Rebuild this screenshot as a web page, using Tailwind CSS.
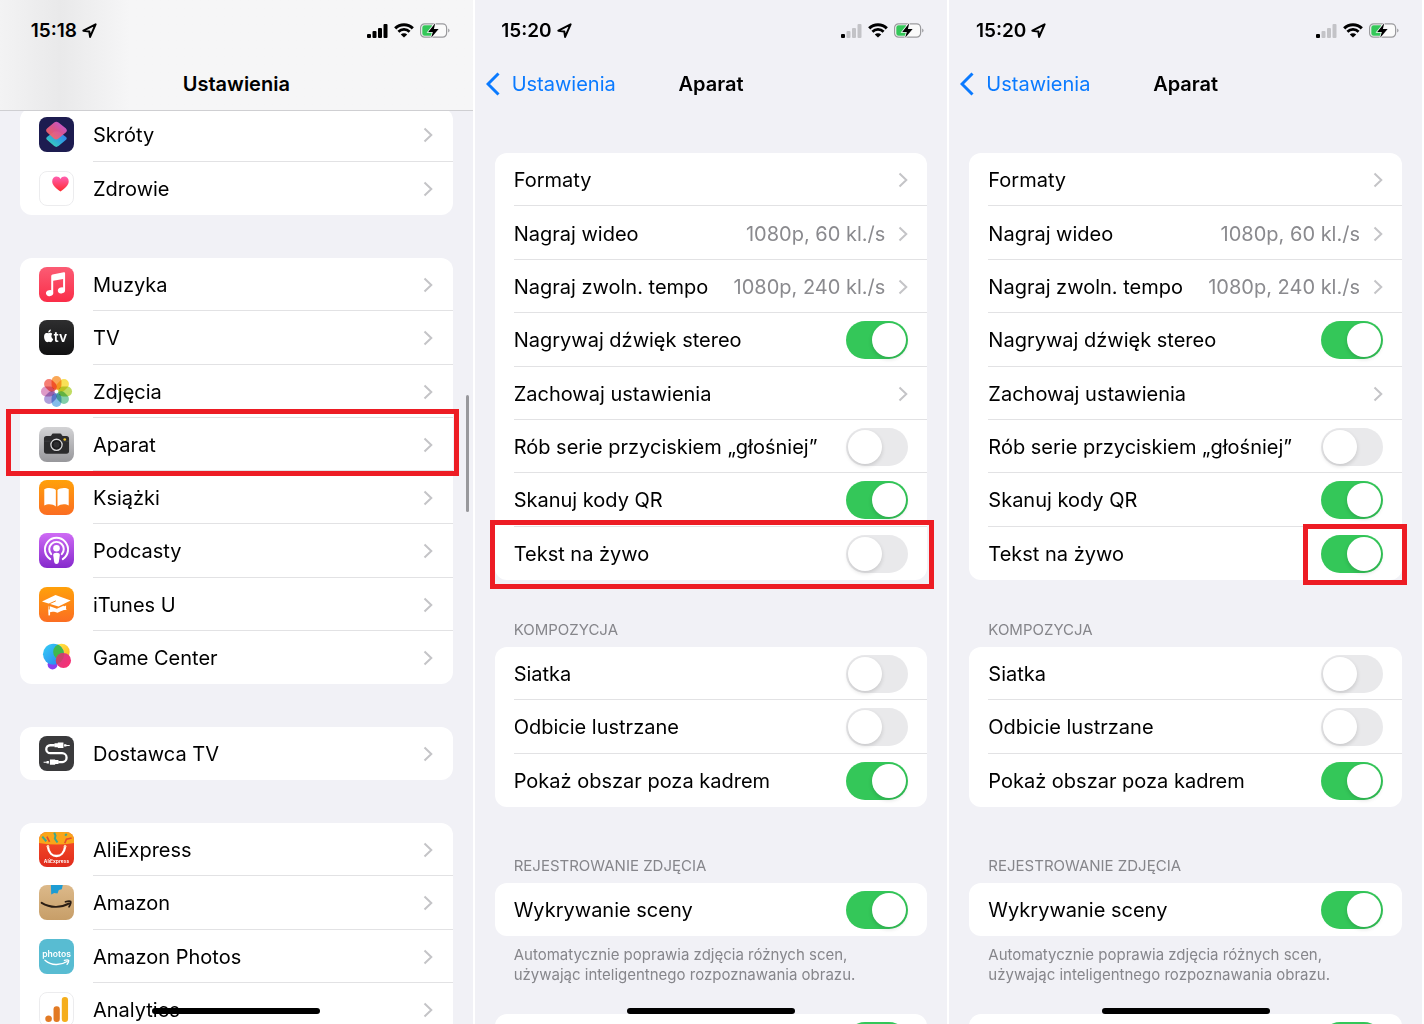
<!DOCTYPE html>
<html lang="pl">

<head>
  <meta charset="UTF-8">
  <meta name="viewport" content="width=device-width, initial-scale=1.0">
  <script src="https://cdn.jsdelivr.net/npm/@tailwindcss/browser@4"></script>
  <title>Ustawienia - Aparat</title>
</head>

<body class="bg-white font-['Inter','Liberation_Sans',sans-serif] text-black">
  <!-- shared gradients and status icons -->
  <svg class="absolute size-0" aria-hidden="true">
    <defs>
      <linearGradient id="g-short-top" x1="0" y1="1" x2="1" y2="0"><stop offset="0" stop-color="#ff6a4d"/><stop offset="0.5" stop-color="#e8588f"/><stop offset="1" stop-color="#c85cf0"/></linearGradient>
      <linearGradient id="g-short-bottom" x1="1" y1="0" x2="0" y2="1"><stop offset="0" stop-color="#3a6ff0"/><stop offset="0.5" stop-color="#2fa8dc"/><stop offset="1" stop-color="#3fe0a8"/></linearGradient>
      <linearGradient id="g-heart" x1="0" y1="0" x2="0" y2="1"><stop offset="0" stop-color="#ff5fb0"/><stop offset="1" stop-color="#ff2a2f"/></linearGradient>
      <linearGradient id="g-music" x1="0" y1="0" x2="0" y2="1"><stop offset="0" stop-color="#fb5c74"/><stop offset="1" stop-color="#fa2d48"/></linearGradient>
      <linearGradient id="g-tv" x1="0" y1="0" x2="0" y2="1"><stop offset="0" stop-color="#2e2e2f"/><stop offset="1" stop-color="#101011"/></linearGradient>
      <linearGradient id="g-camera" x1="0" y1="0" x2="0" y2="1"><stop offset="0" stop-color="#d3d3d5"/><stop offset="1" stop-color="#97979b"/></linearGradient>
      <linearGradient id="g-orange" x1="0" y1="0" x2="0" y2="1"><stop offset="0" stop-color="#ffa10a"/><stop offset="1" stop-color="#fb6d22"/></linearGradient>
      <linearGradient id="g-podcast" x1="0" y1="0" x2="0" y2="1"><stop offset="0" stop-color="#cf6bf5"/><stop offset="1" stop-color="#8529cc"/></linearGradient>
      <linearGradient id="g-game-blue" x1="0" y1="0" x2="1" y2="1"><stop offset="0" stop-color="#35d0f5"/><stop offset="1" stop-color="#2a7df0"/></linearGradient>
      <linearGradient id="g-game-yellow" x1="0" y1="0" x2="1" y2="1"><stop offset="0" stop-color="#fff04a"/><stop offset="1" stop-color="#ffae20"/></linearGradient>
      <linearGradient id="g-game-pink" x1="0" y1="0" x2="1" y2="1"><stop offset="0" stop-color="#d0408a"/><stop offset="1" stop-color="#ff2d6e"/></linearGradient>
      <linearGradient id="g-ali" x1="0" y1="0" x2="0" y2="1"><stop offset="0" stop-color="#f9552a"/><stop offset="1" stop-color="#e02a1c"/></linearGradient>
      <linearGradient id="g-amazon" x1="0" y1="0" x2="0" y2="1"><stop offset="0" stop-color="#dcb98a"/><stop offset="1" stop-color="#c79e68"/></linearGradient>
      <clipPath id="tile"><rect width="106" height="106" rx="24"/></clipPath>
      <clipPath id="game-blue"><circle cx="44" cy="43" r="32"/></clipPath>
    </defs>
    <symbol id="location" viewBox="0 0 15 15"><path d="M13.6 1.3 1.4 7.7l5.9.8.8 5.4z" fill="none" stroke="currentColor" stroke-width="2" stroke-linejoin="round"/></symbol>
    <symbol id="wifi" viewBox="0 0 20 15">
      <path d="M1.2 5.4a12.3 12.3 0 0 1 17.6 0" fill="none" stroke="currentColor" stroke-width="3"/>
      <path d="M4.4 8.8a7.9 7.9 0 0 1 11.2 0" fill="none" stroke="currentColor" stroke-width="2.7"/>
      <path d="M10 14.6 6.8 11.6a4.4 4.4 0 0 1 6.4 0z" fill="currentColor"/>
    </symbol>
    <symbol id="battery" viewBox="0 0 30 15">
      <rect x="0.6" y="0.8" width="26" height="13.4" rx="4" fill="#fafafa" stroke="#9a9a9d" stroke-width="1.2"/>
      <path d="M4.5 2.3H12v10.4H4.5a2.2 2.2 0 0 1-2.2-2.2v-6a2.2 2.2 0 0 1 2.2-2.2z" fill="#34c759"/>
      <path d="M28.2 5.5v4a2.2 2.2 0 0 0 0-4z" fill="#9a9a9d"/>
      <path d="M15.2.2 8.2 9h4.6l-1.6 5.8L18.6 6h-4.7z" fill="#000" stroke="#f4f4f6" stroke-width="1.6" paint-order="stroke"/>
    </symbol>
    <symbol id="chevron" viewBox="0 0 10 16"><path d="m1.5 1.5 6.8 6.5-6.8 6.5" fill="none" stroke="currentColor" stroke-width="2"/></symbol>
    <symbol id="back" viewBox="0 0 14 24"><path d="M12.5 1.5 2 12l10.5 10.5" fill="none" stroke="currentColor" stroke-width="3"/></symbol>
  </svg>

  <main class="grid h-screen grid-cols-3 gap-[2px] overflow-hidden pr-[2px]">
    <!-- Ustawienia -->
    <section class="relative overflow-hidden bg-[#f1f1f6]">
      <header class="absolute inset-x-0 top-0 z-10 h-[111px] border-b border-[#cfcfd2] bg-linear-to-r from-[#f3f3f4] via-[#e9e9ea] via-[60px] to-[#f6f6f7] to-[130px]">
        <div class="status" data-time="15:18" data-bars="4"></div>
        <h1 class="mt-[23px] text-center text-[20px] leading-[30px] font-semibold">Ustawienia</h1>
      </header>
      <nav id="settings" class="flex flex-col gap-[43px] px-5 pt-[108px]"></nav>
      <div class="absolute top-[395px] right-[4px] h-[117px] w-[3px] rounded-full bg-[#98989c]"></div>
      <div class="absolute inset-x-0 bottom-[10px] mx-auto h-[6px] w-[168px] rounded-full bg-black"></div>
    </section>

    <!-- Aparat, Tekst na żywo off -->
    <section class="camera relative overflow-hidden bg-[#f1f1f6]" data-live="off"></section>

    <!-- Aparat, Tekst na żywo on -->
    <section class="camera relative overflow-hidden bg-[#f1f1f6]" data-live="on"></section>
  </main>

  <script>
    const tile = fill => `<rect width="106" height="106" rx="24" fill="${fill}"/>`;
    const whiteTile = '<rect x="1.5" y="1.5" width="103" height="103" rx="23" fill="#fff" stroke="#ececee" stroke-width="3"/>';
    const petals = ['#f9993a', '#f7dc3a', '#b5d647', '#6cc79a', '#6fb0e6', '#a08fd6', '#d888bd', '#f4675a'];

    const icons = {
      shortcuts: tile('#1d1c50') + `
        <path d="M46 44 25 60q-6 5 0 10l21 18q6 5 13 0l22-18q6-5 0-10L59 44z" fill="url(#g-short-bottom)"/>
        <path d="M46 17 25 34q-7 6 0 13l20 18q7 6 14 0l22-18q7-6 0-13L59 17q-7-5-13 0z" fill="url(#g-short-top)" fill-opacity="0.93"/>`,
      health: whiteTile + '<path d="M65 62C50 52 40 43 40 31c0-15 18-19 25-7 7-12 25-8 25 7 0 12-10 21-25 31z" fill="url(#g-heart)"/>',
      music: tile('url(#g-music)') + `
        <path d="M37 28q0-4 4-5l34-7q4-1 4 3v51h-6V36l-30 6v38h-6z" fill="#fff"/>
        <ellipse cx="32" cy="79" rx="11" ry="9" transform="rotate(-15 32 79)" fill="#fff"/>
        <ellipse cx="68" cy="71" rx="11" ry="9" transform="rotate(-15 68 71)" fill="#fff"/>`,
      tv: tile('url(#g-tv)') + `
        <path d="M40 42c-4-5-9-3-12-2-4-1-8-2-11 3-4 8 0 20 6 24 3 1 4-1 7-1s4 2 7 1c3-2 5-6 6-9-6-3-7-11-3-16z" fill="#fff"/>
        <path d="M28 38c0-5 3-8 8-9 0 5-3 9-8 9z" fill="#fff"/>
        <text x="45" y="67" font-size="42" font-weight="600" fill="#fff">tv</text>`,
      photos: petals.map((color, i) =>
        `<rect x="38" y="6" width="30" height="42" rx="15" fill="${color}" fill-opacity="0.85" class="mix-blend-multiply" transform="rotate(${i * 45} 53 53)"/>`).join('')
        + '<circle cx="53" cy="53" r="4" fill="#fff"/>',
      camera: tile('url(#g-camera)') + `
        <path d="M23 27h11q3 0 4-3 1-4 6-4h19q5 0 6 4 1 3 4 3h10q8 0 8 8v38q0 8-8 8H23q-8 0-8-8V35q0-8 8-8z" fill="#2b2b2d"/>
        <path d="M16 43h75" stroke="#46464a" stroke-width="2"/>
        <circle cx="53" cy="54" r="20" fill="#1b1b1d"/>
        <circle cx="53" cy="54" r="17" fill="none" stroke="#d9d9db" stroke-width="4"/>
        <circle cx="53" cy="54" r="9" fill="#2e2e31"/>
        <circle cx="78" cy="38" r="4" fill="#f1c62e"/>`,
      books: tile('url(#g-orange)') + `
        <path d="M51 30c-8-7-26-8-35-2v49c10-5 26-5 35 3z" fill="#fff"/>
        <path d="M56 30c8-7 26-8 34-2v49c-9-5-25-5-34 3z" fill="#fff"/>`,
      podcasts: tile('url(#g-podcast)') + `
        <g fill="none" stroke="#fff" stroke-width="6" stroke-linecap="round">
          <path d="M34 79a35 35 0 1 1 38 0"/>
          <path d="M37 64a22 22 0 1 1 32 0"/>
        </g>
        <circle cx="53" cy="46" r="10" fill="#fff"/>
        <path d="M43 67q0-7 10-7t10 7l-3 21q-1 6-7 6t-7-6z" fill="#fff"/>`,
      itunes: tile('url(#g-orange)') + `
        <path d="m9 44 41-20 46 17-37 18z" fill="#fff"/>
        <path d="m29 57 25 9 20-9 10 12-31 4-24 4z" fill="#fff"/>
        <path d="m56 78 26-12v-10l-29 13-24-9v9z" fill="#fff"/>
        <path d="M51 42 31 51v34" fill="none" stroke="#fb8517" stroke-width="3"/>
        <path d="M31 68v18" stroke="#fff" stroke-width="5"/>`,
      game: `
        <circle cx="68" cy="36" r="25" fill="url(#g-game-yellow)"/>
        <circle cx="41" cy="74" r="15" fill="#8a3ff0"/>
        <circle cx="44" cy="43" r="32" fill="url(#g-game-blue)"/>
        <g clip-path="url(#game-blue)"><circle cx="68" cy="36" r="25" fill="#3fb84f"/></g>
        <circle cx="74" cy="62" r="23" fill="url(#g-game-pink)"/>
        <g clip-path="url(#game-blue)"><circle cx="74" cy="62" r="23" fill="#c8446a"/></g>`,
      provider: tile('#3a3a3c') + `
        <path d="M48 28H34a12 12 0 0 0 0 24h36a13 13 0 0 1 0 27H58" fill="none" stroke="#fff" stroke-width="7"/>
        <path d="M47 22h10v-2h17v16H57v-2H47zM76 25h7v2h10v3H83v2h-7zM59 73H49v-2H33v16h16v-2h10zM30 76h-7v2H14v3h9v2h7z" fill="#fff"/>`,
      ali: tile('url(#g-ali)') + `
        <g clip-path="url(#tile)">
          <path d="M0 0h106v33q-53 10-106 0z" fill="#f9a51a"/>
          <path d="m10 14 12 14M46 2l4 9-2 9 8 12M84 6l-5 5" fill="none" stroke="#3aa88f" stroke-width="6"/>
          <path d="m99 18-16 4-5 12M24 14l8 16" fill="none" stroke="#e64a2b" stroke-width="5"/>
        </g>
        <path d="M27 45c5 37 47 37 52 0" fill="none" stroke="#fff" stroke-width="7" stroke-linecap="round"/>
        <circle cx="27" cy="43" r="4" fill="#ffd9b8"/><circle cx="79" cy="43" r="4" fill="#ffd9b8"/>
        <text x="53" y="94" font-size="15" font-weight="600" text-anchor="middle" fill="#fff">AliExpress</text>`,
      amazon: tile('url(#g-amazon)') + `
        <path d="M36 0h36l-3 13-9 2-4 11-10-2-9 5z" fill="#1e9cd3"/>
        <path d="M8 54c26 16 58 16 84 2" fill="none" stroke="#2a1d14" stroke-width="6" stroke-linecap="round"/>
        <path d="M80 51q12-4 16-1 2 5-5 16" fill="none" stroke="#2a1d14" stroke-width="5" stroke-linecap="round"/>`,
      amazonPhotos: tile('#58bcd2') + `
        <text x="53" y="56" font-size="26" font-weight="600" text-anchor="middle" fill="#fff">photos</text>
        <path d="M18 64c20 17 46 17 67 4M77 65q10-3 13 0 1 4-5 12" fill="none" stroke="#fff" stroke-width="4" stroke-linecap="round"/>`,
      analytics: whiteTile + `
        <rect x="69" y="15" width="19" height="76" rx="9" fill="#f5ae1c"/>
        <rect x="44" y="43" width="19" height="48" rx="9" fill="#e27a24"/>
        <circle cx="29" cy="81" r="10" fill="#e27a24"/>`
    };

    const groups = [
      { size: 'min-h-[107px]', rows: [['shortcuts', 'Skróty'], ['health', 'Zdrowie']] },
      {
        size: 'min-h-[426px]',
        rows: [['music', 'Muzyka'], ['tv', 'TV'], ['photos', 'Zdjęcia'], ['camera', 'Aparat'],
          ['books', 'Książki'], ['podcasts', 'Podcasty'], ['itunes', 'iTunes U'], ['game', 'Game Center']]
      },
      { size: 'min-h-[53px]', rows: [['provider', 'Dostawca TV']] },
      {
        size: 'min-h-[213px]',
        rows: [['ali', 'AliExpress'], ['amazon', 'Amazon'], ['amazonPhotos', 'Amazon Photos'], ['analytics', 'Analytics']]
      }
    ];

    const chevron = '<svg class="h-4 w-[10px] shrink-0 text-[#c4c4c7]" aria-hidden="true"><use href="#chevron"/></svg>';
    const listClass = 'grid shrink-0 auto-rows-fr rounded-[12px] bg-white';

    document.getElementById('settings').innerHTML = groups.map(group => `
      <ul class="${listClass} ${group.size}">
        ${group.rows.map(([icon, name]) => `
          <li class="group relative">
            <a href="#" class="flex h-full items-center gap-[19px] pl-[19px]">
              <svg class="size-[35px] shrink-0" viewBox="0 0 106 106" aria-hidden="true">${icons[icon]}</svg>
              <span class="flex flex-1 items-center justify-between self-stretch border-b border-[#e2e2e4] pt-[2px] pr-5 text-[20px] group-last:border-transparent">${name}${chevron}</span>
            </a>
            ${name === 'Aparat' ? '<div class="pointer-events-none absolute -top-[9px] -right-[6px] -bottom-[5px] -left-[14px] z-10 border-5 border-[#ed1c24]"></div>' : ''}
          </li>`).join('')}
      </ul>`).join('');

    const toggle = (id, on) => `<input id="${id}" type="checkbox" role="switch" ${on ? 'checked' : ''}
      class="h-[38px] w-[62px] shrink-0 appearance-none rounded-full bg-[#e9e9eb] p-[2px] before:block before:size-[34px] before:rounded-full before:bg-white before:shadow-[0_2px_4px_rgba(0,0,0,0.15)] before:content-[''] checked:bg-[#34c759] checked:before:translate-x-6">`;

    // value: true/false is a switch, a string is a link with that detail
    function cameraRow(name, value, id, mark = '') {
      const line = 'ml-[19px] flex h-full items-center justify-between border-b border-[#e2e2e4] pt-[2px] pr-[19px] text-[20px] group-last:border-transparent';
      const content = typeof value === 'boolean'
        ? `<div class="${line}"><label for="${id}">${name}</label>${toggle(id, value)}</div>`
        : `<a href="#" class="${line}"><span>${name}</span><span class="flex items-center gap-[13px] text-[#8a8a8e]">${value}${chevron}</span></a>`;
      return `<li class="group relative">${content}${mark}</li>`;
    }

    document.querySelectorAll('.camera').forEach(section => {
      const live = section.dataset.live === 'on';
      const key = 'live-' + section.dataset.live;
      const mark = live
        ? '<div class="pointer-events-none absolute -top-[3px] -right-[5px] -bottom-[5px] w-[104px] border-5 border-[#ed1c24]"></div>'
        : '<div class="pointer-events-none absolute -top-[7px] -right-[7px] -bottom-[9px] -left-[5px] border-5 border-[#ed1c24]"></div>';
      section.innerHTML = `
        <header>
          <div class="status" data-time="15:20" data-bars="1"></div>
          <div class="mt-[23px] grid grid-cols-[1fr_auto_1fr] items-center text-[20px] leading-[30px]">
            <a href="#" class="flex items-center gap-3 pl-[11px] text-[#0a7aff]"><svg class="h-6 w-[14px]" aria-hidden="true"><use href="#back"/></svg>Ustawienia</a>
            <h2 class="font-semibold">Aparat</h2>
          </div>
        </header>
        <div class="px-5 pt-[54px]">
          <ul class="${listClass} min-h-[427px]">
            ${cameraRow('Formaty', '')}
            ${cameraRow('Nagraj wideo', '1080p, 60 kl./s')}
            ${cameraRow('Nagraj zwoln. tempo', '1080p, 240 kl./s')}
            ${cameraRow('Nagrywaj dźwięk stereo', true, key + '-stereo')}
            ${cameraRow('Zachowaj ustawienia', '')}
            ${cameraRow('Rób serie przyciskiem „głośniej”', false, key + '-burst')}
            ${cameraRow('Skanuj kody QR', true, key + '-qr')}
            ${cameraRow('Tekst na żywo', live, key + '-text', mark)}
          </ul>
          <h3 class="mt-10 mb-[7px] pl-[19px] text-[15px] leading-[20px] text-[#86868b]">KOMPOZYCJA</h3>
          <ul class="${listClass} min-h-[160px]">
            ${cameraRow('Siatka', false, key + '-grid')}
            ${cameraRow('Odbicie lustrzane', false, key + '-mirror')}
            ${cameraRow('Pokaż obszar poza kadrem', true, key + '-frame')}
          </ul>
          <h3 class="mt-[49px] mb-[7px] pl-[19px] text-[15px] leading-[20px] text-[#86868b]">REJESTROWANIE ZDJĘCIA</h3>
          <ul class="${listClass} min-h-[53px]">
            ${cameraRow('Wykrywanie sceny', true, key + '-scene')}
          </ul>
          <p class="mt-[9px] pl-[19px] text-[15px] leading-[20px] text-[#86868b]">Automatycznie poprawia zdjęcia różnych scen,<br>używając inteligentnego rozpoznawania obrazu.</p>
          <div class="mt-[29px] flex h-[53px] items-center justify-end rounded-[12px] bg-white pr-[19px]">
            ${toggle(key + '-lens', true)}
          </div>
        </div>
        <div class="absolute inset-x-0 bottom-[10px] mx-auto h-[6px] w-[168px] rounded-full bg-black"></div>`;
      document.getElementById(key + '-lens').setAttribute('aria-label', 'Korekcja obiektywu');
    });

    document.querySelectorAll('.status').forEach(bar => {
      const active = Number(bar.dataset.bars);
      const bars = [[0, 10, 4], [5.5, 7, 7], [11, 4, 10], [16.5, 0, 14]].map(([x, y, h], i) =>
        `<rect x="${x}" y="${y}" width="4" height="${h}" rx="1" fill="${i < active ? '#000' : '#c3c3c7'}"/>`).join('');
      bar.innerHTML = `
        <div class="flex items-center justify-between pt-[15px] pr-[23px]">
          <div class="flex w-[97px] items-center justify-end gap-[5px] text-[19px] leading-[31px] font-semibold">${bar.dataset.time}<svg class="size-[15px]" aria-hidden="true"><use href="#location"/></svg></div>
          <div class="flex items-center gap-[6px]">
            <svg class="h-[14px] w-[21px]" viewBox="0 0 21 14" aria-hidden="true">${bars}</svg>
            <svg class="h-[15px] w-[20px]" aria-hidden="true"><use href="#wifi"/></svg>
            <svg class="h-[15px] w-[30px]" aria-hidden="true"><use href="#battery"/></svg>
          </div>
        </div>`;
    });
  </script>
</body>

</html>
